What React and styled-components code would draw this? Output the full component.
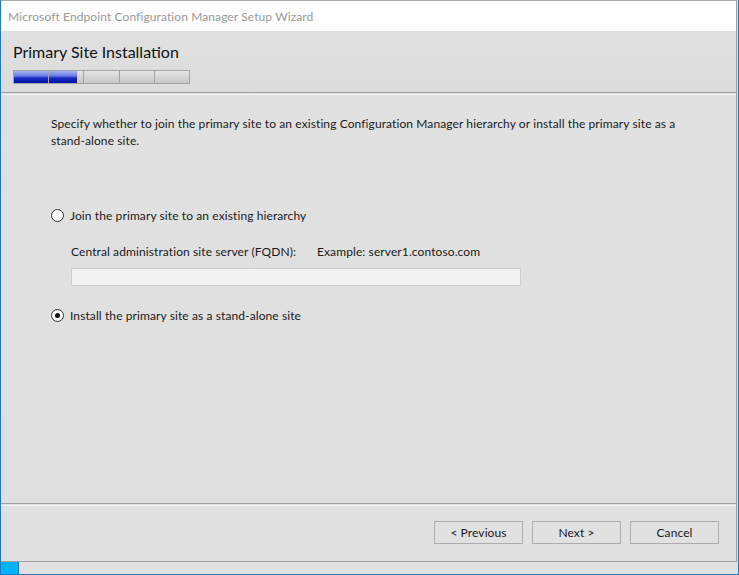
import React from 'react';
import styled, { createGlobalStyle } from 'styled-components';

const steps = [100, 80, 0, 0, 0];

const GlobalStyle = createGlobalStyle`
  html, body {
    margin: 0;
    padding: 0;
    background: #e1e1e1;
  }
  * {
    box-sizing: border-box;
  }
`;

const Wizard = () => (
  <Screen>
    <GlobalStyle />
    <Window>
      <TitleBar>Microsoft Endpoint Configuration Manager Setup Wizard</TitleBar>
      <Header>
        <PageTitle>Primary Site Installation</PageTitle>
        <Progress>
          {steps.map((fill, i) => (
            <Step key={i}>
              <StepFill style={{ width: `${fill}%` }} />
            </Step>
          ))}
        </Progress>
      </Header>
      <Separator />
      <Body>
        <Intro>
          Specify whether to join the primary site to an existing Configuration Manager hierarchy or install the
          primary site as a stand-alone site.
        </Intro>
        <Option>
          <Radio />
          <Label>Join the primary site to an existing hierarchy</Label>
        </Option>
        <SubSection>
          <FieldRow>
            <Label>Central administration site server (FQDN):</Label>
            <Label>Example: server1.contoso.com</Label>
          </FieldRow>
          <TextInput disabled />
        </SubSection>
        <Option>
          <Radio checked />
          <Label>Install the primary site as a stand-alone site</Label>
        </Option>
      </Body>
      <Separator />
      <Footer>
        <Button>&lt; Previous</Button>
        <Button>Next &gt;</Button>
        <Button>Cancel</Button>
      </Footer>
    </Window>
    <TaskStrip>
      <StartTile />
    </TaskStrip>
  </Screen>
);

export default Wizard;

const Screen = styled.div`
  width: 739px;
  height: 575px;
  display: flex;
  flex-direction: column;
  border-left: 1px solid #1e7cc4;
  border-right: 1px solid #1e7cc4;
  border-bottom: 1px solid #1e7cc4;
  background: #e1e1e1;
  font-family: Lato, 'Noto Sans', sans-serif;
  font-size: 12px;
  letter-spacing: 0.1px;
  color: #1a1a1a;
`;

const Window = styled.div`
  flex: 1;
  display: flex;
  flex-direction: column;
  margin-right: 1px;
  border-top: 1px solid #aaaaaa;
  border-right: 1px solid #9e9e9e;
  border-bottom: 1px solid #9e9e9e;
  background: #e1e1e1;
`;

const TitleBar = styled.div`
  height: 30px;
  display: flex;
  align-items: center;
  padding-left: 7px;
  background: #ffffff;
  color: #999999;
  font-size: 12px;
`;

const Header = styled.div`
  height: 61px;
  padding: 11px 0 0 12px;
  background: linear-gradient(#e0e0e0, #dcdcdc);
`;

const PageTitle = styled.div`
  font-size: 16px;
  line-height: 20px;
  letter-spacing: 0;
  color: #111;
`;

const Progress = styled.div`
  display: flex;
  margin-top: 8px;
  width: 177px;
  height: 14px;
`;

const Step = styled.div`
  flex: 1;
  border: 1px solid #a3a3a3;
  margin-left: -1px;
  background: linear-gradient(#e6e6e6, #d4d4d4 55%, #c9c9c9);
  overflow: hidden;

  &:first-child {
    margin-left: 0;
  }
`;

const StepFill = styled.div`
  height: 100%;
  background: linear-gradient(#a8b2f0, #6a7ce4 40%, #1526c0 60%, #0416a8);
`;

const Separator = styled.div`
  height: 3px;
  border-top: 1px solid #a0a0a0;
  border-bottom: 1px solid #f2f2f2;
  background: #e1e1e1;
`;

const Body = styled.div`
  flex: 1;
  padding: 20px 40px 0 50px;
  background: linear-gradient(#e1e1e1, #dfdfdf);
`;

const Intro = styled.p`
  margin: 0 0 58px;
  line-height: 17px;
  max-width: 650px;
`;

const Option = styled.label`
  display: flex;
  align-items: center;
  gap: 6px;
  height: 17px;
`;

const Radio = styled.span`
  width: 13px;
  height: 13px;
  border-radius: 50%;
  border: 1px solid #333;
  background: #fff;
  display: flex;
  align-items: center;
  justify-content: center;

  &::after {
    content: '';
    width: 5px;
    height: 5px;
    border-radius: 50%;
    background: ${p => (p.checked ? '#111' : 'transparent')};
  }
`;

const Label = styled.span`
  line-height: 17px;
  color: #1a1a1a;
`;

const SubSection = styled.div`
  padding: 19px 0 21px 20px;
`;

const FieldRow = styled.div`
  display: grid;
  grid-template-columns: 246px auto;
  margin-bottom: 8px;
`;

const TextInput = styled.input`
  display: block;
  width: 450px;
  height: 18px;
  border: 1px solid #cfcfcf;
  background: #f2f2f2;
  padding: 0;
`;

const Footer = styled.div`
  height: 55px;
  display: flex;
  justify-content: flex-end;
  gap: 9px;
  padding: 15px 17px 0 0;
`;

const Button = styled.button`
  width: 89px;
  height: 23px;
  border: 1px solid #adadad;
  background: #e1e1e1;
  font-family: inherit;
  font-size: 12px;
  letter-spacing: 0.1px;
  color: #1a1a1a;
  padding: 0;
`;

const TaskStrip = styled.div`
  height: 12px;
  display: flex;
  background: #e1e1e1;
`;

const StartTile = styled.div`
  width: 18px;
  height: 100%;
  background: #00b4ff;
  border-right: 1px solid #1e7cc4;
`;
